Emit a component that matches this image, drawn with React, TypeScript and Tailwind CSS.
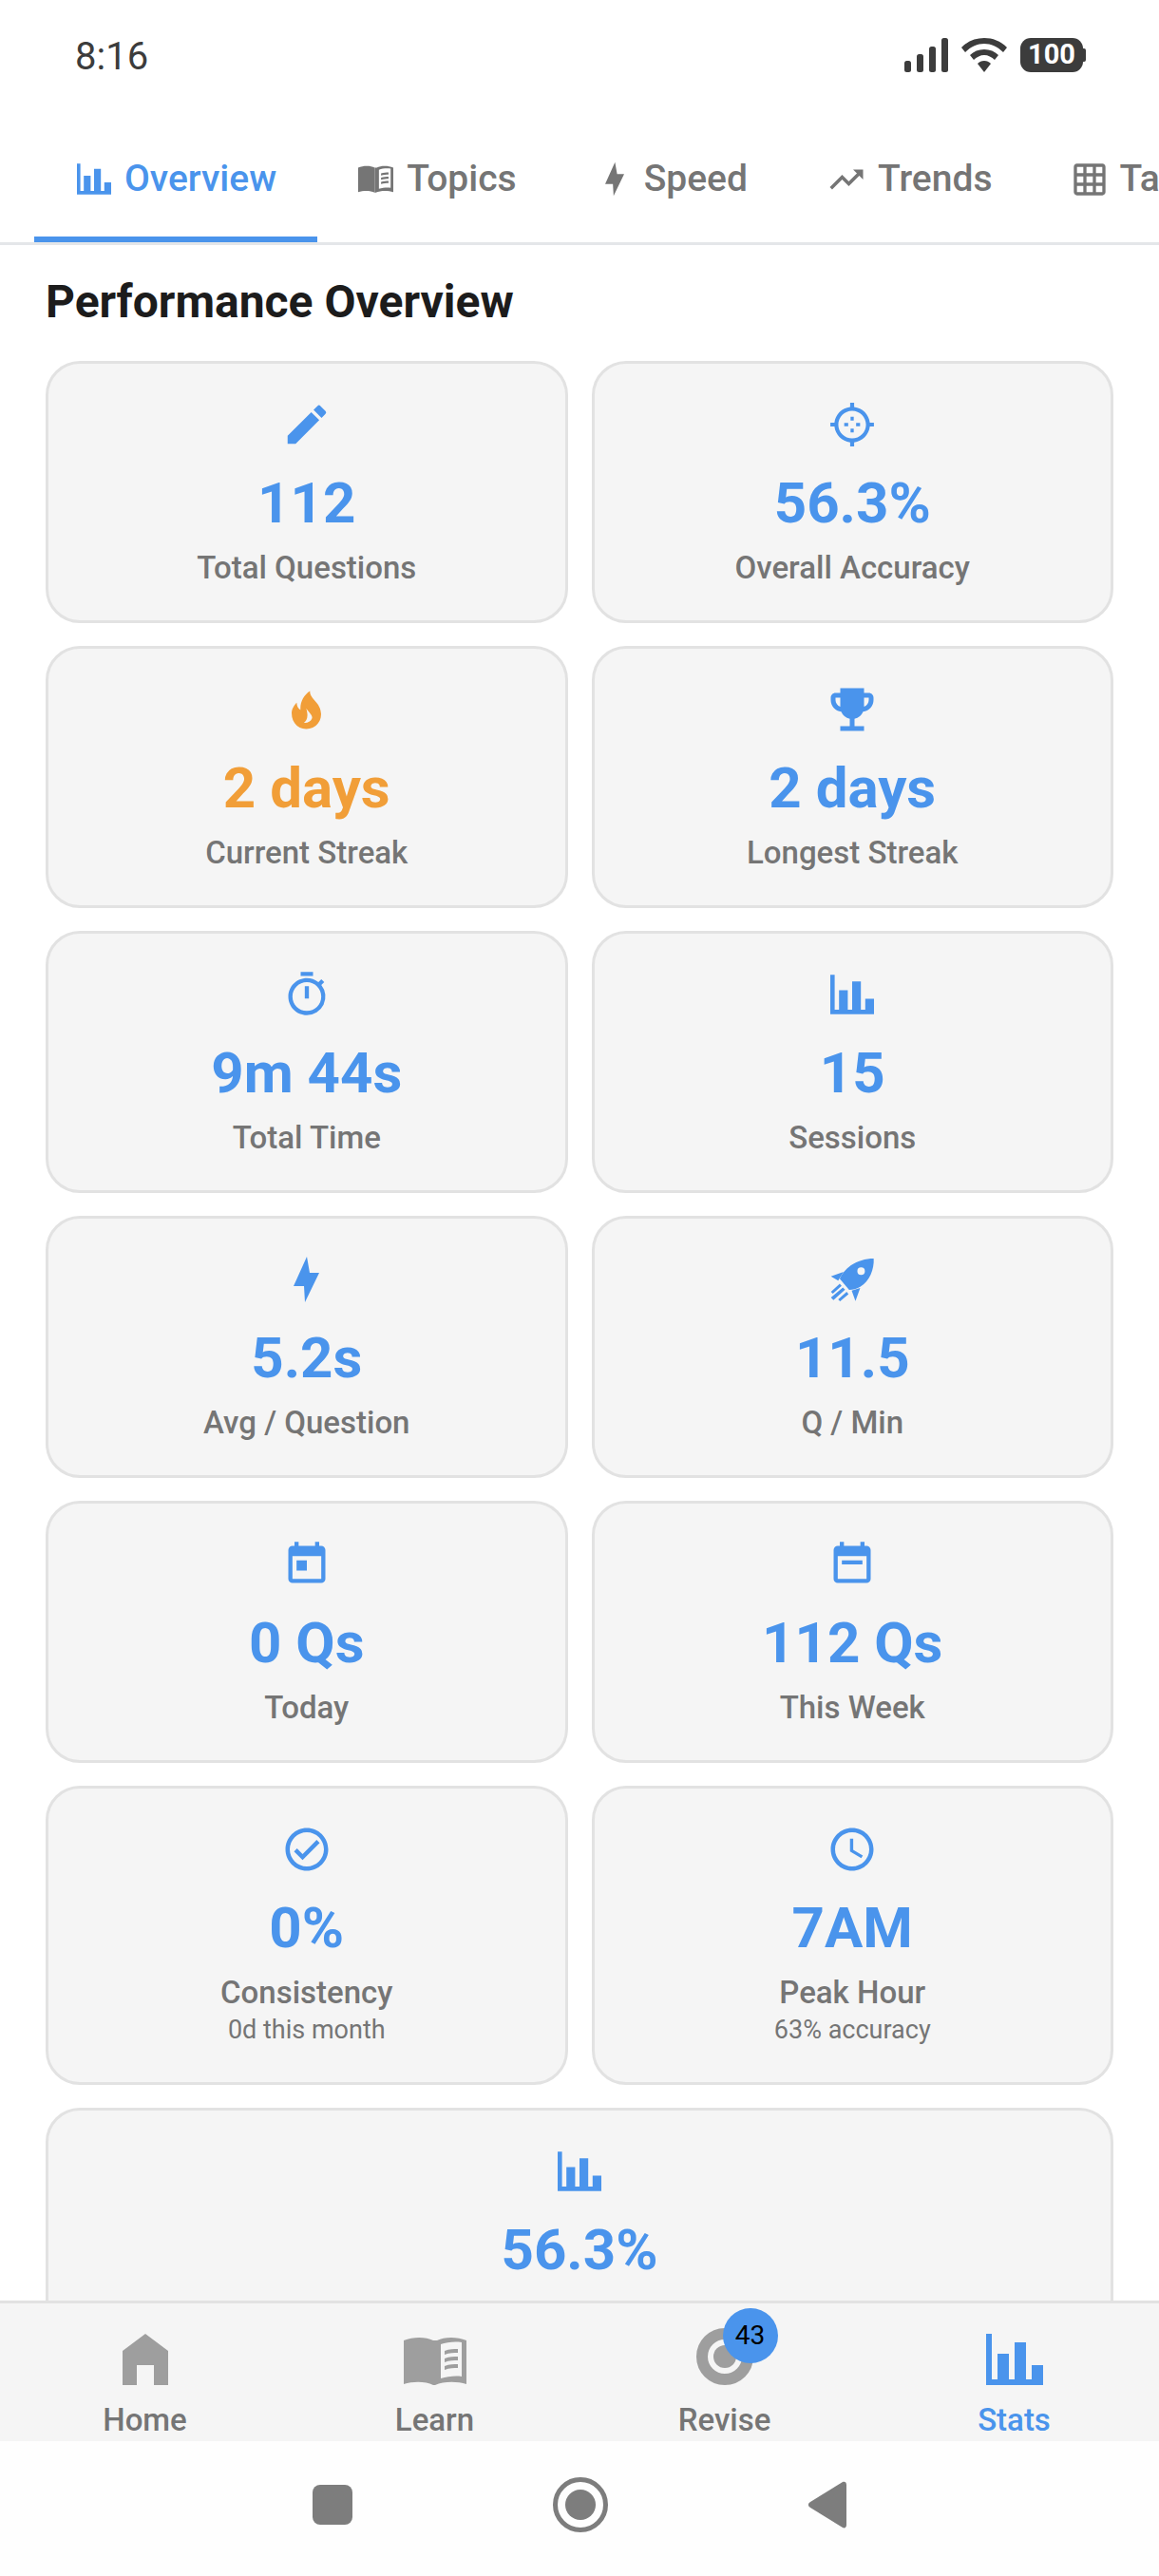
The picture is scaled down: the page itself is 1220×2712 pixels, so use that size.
import type { ReactNode } from "react";
import {
  MdEdit,
  MdEmojiEvents,
  MdOutlineTimer,
  MdToday,
  MdOutlineCheckCircle,
  MdAccessTime,
  MdTrendingUp,
  MdOutlineGridOn,
} from "react-icons/md";

function Bars({ className }: { className: string }) {
  return (
    <svg viewBox="0 0 60 54" className={className} fill="currentColor">
      <path d="M0 0h6v48h6V21h12v27h6V9h12v39h6V33h12v21H0z" />
    </svg>
  );
}

function Book({ className }: { className: string }) {
  return (
    <svg viewBox="0 0 66 51" className={className} fill="currentColor">
      <path d="M0 4C10 0 23 0 31 4v47c-8-4-21-4-31-1z" />
      <path
        fillRule="evenodd"
        d="M35 4c8-4 21-4 31 0v46c-10-3-24-3-33 1-1 0-1 0-2 0V4zM39 8v36c7-2 15-3 22-2V6c-8-1-16 0-22 2z"
      />
      <path d="M43 15c5-2 10-2 14-2v4c-4 0-9 0-14 2zM43 23c5-2 10-2 14-2v4c-4 0-9 0-14 2zM43 31c5-2 10-2 14-2v4c-4 0-9 0-14 2z" />
    </svg>
  );
}

function Bolt({ className }: { className: string }) {
  return (
    <svg viewBox="0 0 27 48" className={className} fill="currentColor">
      <path d="M14 0 0 31h11l1 17 15-31H17z" />
    </svg>
  );
}

function WeekCalendar({ className }: { className: string }) {
  return (
    <svg viewBox="0 0 24 24" className={className} fill="currentColor">
      <path d="M19 3h-1V1h-2v2H8V1H6v2H5c-1.11 0-1.99.9-1.99 2L3 19c0 1.1.89 2 2 2h14c1.1 0 2-.9 2-2V5c0-1.1-.9-2-2-2zm0 16H5V8h14v11zM7 10h10v2H7z" />
    </svg>
  );
}

function Crosshair({ className }: { className: string }) {
  return (
    <svg viewBox="0 0 24 24" className={className} fill="currentColor">
      <path d="M20.94 11c-.46-4.17-3.77-7.48-7.94-7.94V1h-2v2.06C6.83 3.52 3.52 6.83 3.06 11H1v2h2.06c.46 4.17 3.77 7.48 7.94 7.94V23h2v-2.06c4.17-.46 7.48-3.77 7.94-7.94H23v-2h-2.06zM12 19c-3.87 0-7-3.13-7-7s3.13-7 7-7 7 3.13 7 7-3.13 7-7 7z" />
      <path d="M11.2 8h1.6v2h-1.6zM11.2 14h1.6v2h-1.6zM8 11.2h2v1.6H8zM14 11.2h2v1.6h-2z" />
    </svg>
  );
}

function Flame({ className }: { className: string }) {
  return (
    <svg viewBox="70 25 120 140" className={className} fill="currentColor">
      <path
        fillRule="evenodd"
        d="M140 35C138 60 175 70 175 108 175 135 155 155 128 155 100 155 82 133 82 105 82 92 90 80 98 72 98 82 102 90 110 95 108 70 120 48 140 35ZM128 90C135 102 150 112 146 122 142 132 130 137 120 135 130 130 136 116 128 90Z"
      />
    </svg>
  );
}

function Rocket({ className }: { className: string }) {
  return (
    <svg viewBox="70 25 142 142" className={className} fill="currentColor">
      <path
        fillRule="evenodd"
        d="M208 28C210 62 195 100 165 118 153 125 142 128 130 128L100 92C106 78 118 62 135 50 155 36 182 28 208 28ZM168 56A12 12 0 1 0 168.01 80 12 12 0 1 0 168 56Z"
      />
      <path d="M72 85 112 70 95 98zM138 130 165 122 150 163z" />
      <path d="M100 108 106 115 78 140 72 134zM110 120 117 127 80 160 72 152zM122 134 128 141 101 164 95 158z" />
    </svg>
  );
}

function Home({ className }: { className: string }) {
  return (
    <svg viewBox="0 0 48 54" className={className} fill="currentColor">
      <path d="M24 0 48 18v36H33V33H15v21H0V18z" />
    </svg>
  );
}

type Stat = { icon: ReactNode; value: string; label?: string; sub?: string; orange?: boolean };

const stats: Stat[] = [
  { icon: <MdEdit size={54} />, value: "112", label: "Total Questions" },
  { icon: <Crosshair className="h-[50px] w-[50px]" />, value: "56.3%", label: "Overall Accuracy" },
  { icon: <Flame className="h-[47px] w-[40px]" />, value: "2 days", label: "Current Streak", orange: true },
  { icon: <MdEmojiEvents size={60} />, value: "2 days", label: "Longest Streak" },
  { icon: <MdOutlineTimer size={52} />, value: "9m 44s", label: "Total Time" },
  { icon: <Bars className="h-[42px] w-[46px]" />, value: "15", label: "Sessions" },
  { icon: <Bolt className="h-[48px] w-[27px]" />, value: "5.2s", label: "Avg / Question" },
  { icon: <Rocket className="h-[47px] w-[47px]" />, value: "11.5", label: "Q / Min" },
  { icon: <MdToday size={52} />, value: "0 Qs", label: "Today" },
  { icon: <WeekCalendar className="h-[52px] w-[52px]" />, value: "112 Qs", label: "This Week" },
  { icon: <MdOutlineCheckCircle size={54} />, value: "0%", label: "Consistency", sub: "0d this month" },
  { icon: <MdAccessTime size={54} />, value: "7AM", label: "Peak Hour", sub: "63% accuracy" },
];

function StatCard({ stat }: { stat: Stat }) {
  const color = stat.orange ? "text-[#f19e38]" : "text-[#4a94ec]";
  return (
    <div className="flex min-h-[276px] flex-col items-center rounded-[36px] border-[3px] border-[#e2e2e2] bg-[#f5f5f5] px-4 pb-[37px] pt-[38px]">
      <div className={`flex h-[52px] items-center justify-center ${color}`}>{stat.icon}</div>
      <div className={`mt-[21px] text-[60px] font-bold leading-[72px] ${color}`}>{stat.value}</div>
      {stat.label && <div className="mt-[14px] text-[33px] font-medium leading-[36px] text-[#757575]">{stat.label}</div>}
      {stat.sub && <div className="mt-[4px] text-[27px] leading-[35px] text-[#757575]">{stat.sub}</div>}
    </div>
  );
}

const tabs: { label: string; icon: ReactNode; active?: boolean }[] = [
  { label: "Overview", icon: <Bars className="h-[33px] w-[36px]" />, active: true },
  { label: "Topics", icon: <Book className="h-[31px] w-[37px]" /> },
  { label: "Speed", icon: <Bolt className="mx-[7px] h-[37px] w-[20px]" /> },
  { label: "Trends", icon: <MdTrendingUp size={42} className="-mx-[2.5px]" /> },
  { label: "Table", icon: <MdOutlineGridOn size={40} className="-mx-[3px]" /> },
];

const navItems: { label: string; active?: boolean }[] = [
  { label: "Home" },
  { label: "Learn" },
  { label: "Revise" },
  { label: "Stats", active: true },
];

function NavIcon({ label }: { label: string }) {
  if (label === "Home") return <Home className="h-[54px] w-[48px]" />;
  if (label === "Learn") return <Book className="h-[51px] w-[66px]" />;
  if (label === "Stats") return <Bars className="h-[54px] w-[60px]" />;
  return (
    <div className="relative">
      <svg viewBox="0 0 60 60" className="h-[60px] w-[60px]">
        <circle cx="30" cy="30" r="24" fill="none" stroke="currentColor" strokeWidth="12" />
        <circle cx="30" cy="30" r="12" fill="currentColor" />
      </svg>
      <div className="absolute left-[28px] top-[-21px] flex h-[58px] w-[58px] items-center justify-center rounded-full bg-[#4a94ec] text-[28px] text-black">
        43
      </div>
    </div>
  );
}

export default function App() {
  return (
    <div className="flex h-[2712px] w-[1220px] flex-col overflow-hidden bg-white font-['Roboto',sans-serif]">
      <div className="flex h-[122px] shrink-0 items-start justify-between pl-[79px] pr-[77px] pt-[36px]">
        <span className="text-[40px] leading-[47px] text-[#3c3c3c]">8:16</span>
        <div className="mt-[4px] flex h-[36px] items-center gap-[14px] text-[#3c3c3c]">
          <svg viewBox="0 0 46 36" className="h-[36px] w-[46px]" fill="currentColor">
            <rect x="0" y="24" width="7" height="12" rx="2.5" />
            <rect x="13" y="17" width="7" height="19" rx="2.5" />
            <rect x="26" y="9" width="7" height="27" rx="2.5" />
            <rect x="39" y="0" width="7" height="36" rx="2.5" />
          </svg>
          <svg viewBox="0 0 48 36" className="h-[36px] w-[48px]" fill="currentColor">
            <path d="M24 0C15 0 7 3 0 10l4 5c6-6 13-9 20-9s14 3 20 9l4-5C41 3 33 0 24 0z" />
            <path d="M24 12c-6 0-11 2-15 6l4 5c3-3 7-5 11-5s8 2 11 5l4-5c-4-4-9-6-15-6z" />
            <path d="M24 24c-3 0-5 1-7 3l7 9 7-9c-2-2-4-3-7-3z" />
          </svg>
          <div className="flex items-center">
            <div className="flex h-[36px] w-[66px] items-center justify-center rounded-[11px] bg-[#3c3c3c] text-[29px] font-bold text-white">
              100
            </div>
            <div className="h-[14px] w-[3px] rounded-r-[2px] bg-[#3c3c3c]" />
          </div>
        </div>
      </div>

      <div className="flex h-[136px] shrink-0 overflow-hidden border-b-[3px] border-[#e4e6e9] pl-[36px]">
        {tabs.map((t) => (
          <div
            key={t.label}
            className={`flex h-[133px] shrink-0 items-center gap-[14px] whitespace-nowrap pr-[43px] pt-[6px] ${
              t.active ? "border-b-[6px] border-[#4a94ec] pl-[45px] text-[#4a94ec]" : "border-b-[6px] border-transparent pl-[43px] text-[#757575]"
            }`}
          >
            {t.icon}
            <span className="text-[39px] font-medium leading-[45px]">{t.label}</span>
          </div>
        ))}
      </div>

      <main className="min-h-0 flex-1 overflow-hidden px-12">
        <h1 className="mb-[38px] mt-[36px] text-[48px] font-bold leading-[48px] text-[#1c1c1c]">Performance Overview</h1>
        <div className="grid grid-cols-2 gap-x-[25px] gap-y-6">
          {stats.map((s) => (
            <StatCard key={s.label} stat={s} />
          ))}
          <div className="col-span-2">
            <StatCard stat={{ icon: <Bars className="h-[42px] w-[46px]" />, value: "56.3%" }} />
          </div>
        </div>
      </main>

      <nav className="grid h-[148px] shrink-0 grid-cols-4 border-t-[3px] border-[#e2e2e2] bg-[#f5f5f5]">
        {navItems.map((n) => (
          <div key={n.label} className={`flex flex-col items-center ${n.active ? "text-[#4a94ec]" : "text-[#9e9e9e]"}`}>
            <div className="flex h-[87px] items-end pb-[1px]">
              <NavIcon label={n.label} />
            </div>
            <span className={`mt-[20px] text-[33px] font-medium leading-[32px] ${n.active ? "text-[#4a94ec]" : "text-[#757575]"}`}>
              {n.label}
            </span>
          </div>
        ))}
      </nav>

      <div className="flex h-[142px] shrink-0 items-center justify-center bg-[#fefefe] pb-2 text-[#7d7d7d]">
        <div className="h-[42px] w-[42px] rounded-[8px] bg-[#7d7d7d]" />
        <svg viewBox="0 0 58 58" className="mx-[211px] h-[58px] w-[58px]">
          <circle cx="29" cy="29" r="26.5" fill="none" stroke="currentColor" strokeWidth="5" />
          <circle cx="29" cy="29" r="16" fill="currentColor" />
        </svg>
        <svg viewBox="0 0 40 50" className="h-[50px] w-[40px]" fill="currentColor">
          <path d="M36 1c2-1 4 0 4 3v42c0 3-2 4-4 3L2 28c-3-2-3-4 0-6z" />
        </svg>
      </div>
    </div>
  );
}
